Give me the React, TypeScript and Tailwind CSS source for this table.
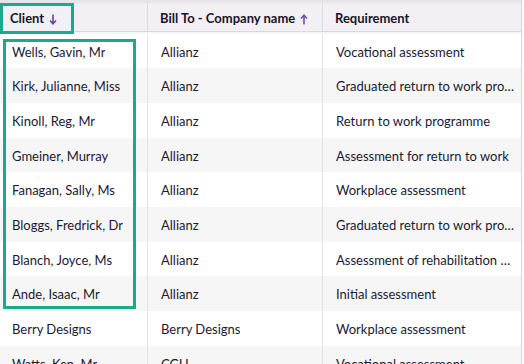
import React from "react";

const rows: [string, string, string][] = [
  ["Wells, Gavin, Mr", "Allianz", "Vocational assessment"],
  ["Kirk, Julianne, Miss", "Allianz", "Graduated return to work programme"],
  ["Kinoll, Reg, Mr", "Allianz", "Return to work programme"],
  ["Gmeiner, Murray", "Allianz", "Assessment for return to work"],
  ["Fanagan, Sally, Ms", "Allianz", "Workplace assessment"],
  ["Bloggs, Fredrick, Dr", "Allianz", "Graduated return to work programme"],
  ["Blanch, Joyce, Ms", "Allianz", "Assessment of rehabilitation needs"],
  ["Ande, Isaac, Mr", "Allianz", "Initial assessment"],
  ["Berry Designs", "Berry Designs", "Workplace assessment"],
  ["Watts, Ken, Mr", "CGU", "Vocational assessment"],
];

function Arrow({ up }: { up?: boolean }) {
  return (
    <svg width="8" height="11" viewBox="0 0 8 11" className="ml-[5px] mt-[1px]">
      {up ? (
        <>
          <path d="M4 1.5 V10.5" stroke="#6a4fae" strokeWidth="1.6" fill="none" />
          <path d="M1 4.5 L4 1.2 L7 4.5" stroke="#6a4fae" strokeWidth="1.5" fill="none" strokeLinejoin="miter" />
        </>
      ) : (
        <>
          <path d="M4 0.5 V9.5" stroke="#6a3f9e" strokeWidth="1.6" fill="none" />
          <path d="M1 6.5 L4 9.8 L7 6.5" stroke="#6a3f9e" strokeWidth="1.5" fill="none" strokeLinejoin="miter" />
        </>
      )}
    </svg>
  );
}

export default function App() {
  return (
    <div
      className="relative w-[524px] h-[364px] overflow-hidden bg-white text-[#1a1933]"
      style={{ fontFamily: "Lato, 'Open Sans', sans-serif" }}
    >
      <div className="w-[522px] border-r border-[#d6d3da] h-full">
        {/* header */}
        <div className="h-[3px] bg-[#e7e4eb]" />
        <div className="flex h-[29px] bg-[#f2f0f5] border-b border-[#dad6df] text-[13px] font-bold text-[#171528]">
          <div className="w-[148px] flex items-center pt-[3px] pl-[10px] border-r border-[#dcd8e0]">
            Client <Arrow />
          </div>
          <div className="w-[175px] flex items-center pt-[3px] pl-[12px] border-r border-[#dcd8e0]">
            Bill To - Company name <Arrow up />
          </div>
          <div className="flex-1 flex items-center pt-[3px] pl-[12px]">Requirement</div>
        </div>
        <div className="h-[1.6px] bg-[#f6f5f8]" />
        {/* body */}
        {rows.map((r, i) => (
          <div
            key={i}
            className={`flex h-[34.67px] text-[13px] ${i % 2 === 1 ? "bg-[#f6f6f6]" : "bg-white"}`}
          >
            <div className="w-[148px] flex items-center pt-[3px] pl-[12px] pr-[6px] border-r border-[#e3e3e3] whitespace-nowrap overflow-hidden">
              <span className="truncate">{r[0]}</span>
            </div>
            <div className="w-[175px] flex items-center pt-[3px] pl-[13px] pr-[6px] border-r border-[#e3e3e3] whitespace-nowrap overflow-hidden">
              <span className="truncate">{r[1]}</span>
            </div>
            <div className="flex-1 min-w-0 flex items-center pt-[3px] pl-[13px] pr-[5px] whitespace-nowrap overflow-hidden">
              <span className="truncate">{r[2]}</span>
            </div>
          </div>
        ))}
      </div>
      {/* highlight overlays */}
      <div className="absolute left-0 top-[3px] w-[74px] h-[31px] border-[3px] border-[#19a98b] pointer-events-none" />
      <div className="absolute left-[3px] top-[39px] w-[133px] h-[270px] border-[3px] border-[#19a98b] pointer-events-none" />
    </div>
  );
}
